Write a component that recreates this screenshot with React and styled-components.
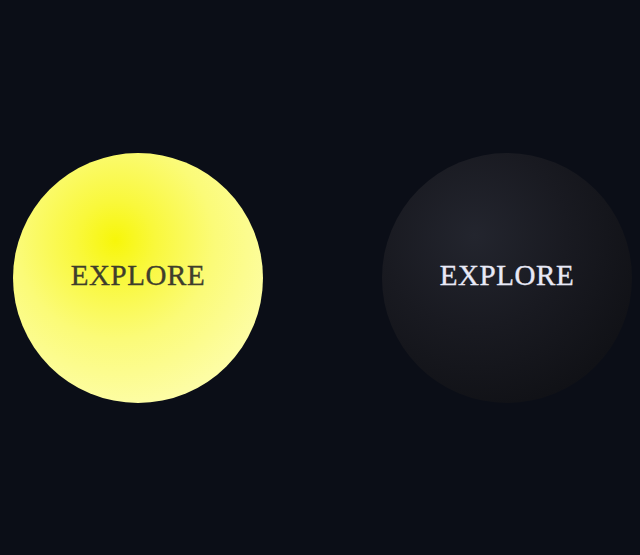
import React from 'react';
import styled, { createGlobalStyle } from 'styled-components';

const GlobalStyle = createGlobalStyle`
  html, body {
    margin: 0;
    padding: 0;
    background: #0b0e17;
  }
`;

const Page = styled.div`
  width: 640px;
  height: 555px;
  display: flex;
  align-items: center;
  padding-left: 13px;
  gap: 119px;
  box-sizing: border-box;
  background: #0b0e17;
`;

const Orb = styled.button`
  width: 250px;
  height: 250px;
  flex-shrink: 0;
  border: none;
  border-radius: 50%;
  padding: 0;
  display: flex;
  align-items: center;
  justify-content: center;
  cursor: pointer;
  font-family: "Liberation Serif", "DejaVu Serif", serif;
  font-size: 29px;
  letter-spacing: 0.6px;
  -webkit-text-stroke: 0.35px currentColor;
  background: ${(p) =>
    p.$dark
      ? 'radial-gradient(circle at 37% 33%, #23252e 0%, #191a21 40%, #111217 75%, #0b0c10 100%)'
      : 'radial-gradient(circle at 41% 35%, #f7f60a 0%, #f9f83c 18%, #fbfb78 45%, #fdfda4 75%, #fefeb8 100%)'};
  color: ${(p) => (p.$dark ? '#e8e9f6' : '#3f3e2c')};
`;

const Label = styled.span`
  display: block;
  line-height: 1;
  transform: translateY(-2px);
`;

export default function App() {
  return (
    <>
      <GlobalStyle />
      <Page>
        <Orb>
          <Label>EXPLORE</Label>
        </Orb>
        <Orb $dark>
          <Label>EXPLORE</Label>
        </Orb>
      </Page>
    </>
  );
}
